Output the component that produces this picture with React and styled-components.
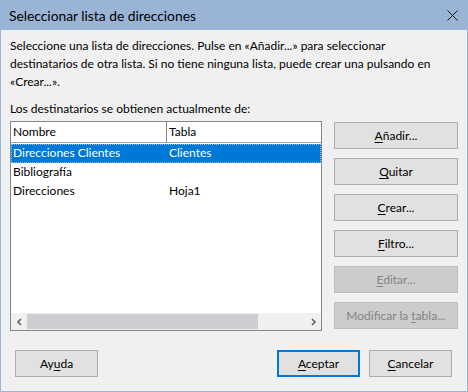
import React, { useState } from "react";
import styled, { createGlobalStyle, css } from "styled-components";

const GlobalStyle = createGlobalStyle`
  html, body { margin: 0; padding: 0; background: #f0f0f0; }
  body { font-family: Lato, "Noto Sans", sans-serif; font-size: 12px; color: #000; }
  * { box-sizing: border-box; }
`;

const Window = styled.div`
  width: 468px;
  height: 392px;
  display: flex;
  flex-direction: column;
  background: #f0f0f0;
  border: 1px solid #9ab4d5;
  border-top: none;
`;

const TitleBar = styled.div`
  height: 30px;
  flex: none;
  display: flex;
  align-items: center;
  justify-content: space-between;
  padding: 0 10px 0 9px;
  background: #9ab4d5;
  margin: 0 -1px;
`;

const Title = styled.div`
  font-size: 13.8px;
  color: #000;
  padding-top: 1px;
`;

const Body = styled.div`
  flex: 1;
  display: flex;
  flex-direction: column;
  padding: 7px 9px 0 9px;
`;

const Intro = styled.p`
  margin: 0;
  line-height: 18px;
`;

const Caption = styled.div`
  margin-top: 9px;
  line-height: 18px;
`;

const Main = styled.div`
  display: flex;
  gap: 12px;
  margin-top: 3px;
`;

const ListBox = styled.div`
  width: 312px;
  height: 210px;
  background: #fff;
  border: 1px solid #828790;
  display: flex;
  flex-direction: column;
`;

const HeaderRow = styled.div`
  display: grid;
  grid-template-columns: 155px 1fr;
  height: 21px;
  border-bottom: 1px solid #a0a0a0;
  flex: none;
`;

const HeaderCell = styled.div`
  padding-left: 2px;
  line-height: 19px;
  ${(p) => p.$divider && css`border-left: 1px solid #828790;`}
`;

const Rows = styled.div`
  flex: 1;
  padding-top: 1px;
`;

const Row = styled.div`
  display: grid;
  grid-template-columns: 155px 1fr;
  height: 19px;
  line-height: 18px;
  cursor: default;
  ${(p) =>
    p.$selected &&
    css`
      background: #0078d7;
      color: #fff;
      outline: 1px dotted #8fb9e8;
      outline-offset: -1px;
    `}
`;

const Cell = styled.div`
  padding-left: 2px;
  white-space: nowrap;
  ${(p) => p.$second && css`padding-left: 3px;`}
`;

const HScroll = styled.div`
  height: 17px;
  flex: none;
  display: flex;
  align-items: center;
  background: #f0f0f0;
`;

const Arrow = styled.div`
  width: 16px;
  height: 17px;
  display: flex;
  align-items: center;
  justify-content: center;
`;

const Track = styled.div`
  flex: 1;
  height: 15px;
`;

const Thumb = styled.div`
  height: 15px;
  background: #cdcdd2;
`;

const SideButtons = styled.div`
  display: flex;
  flex-direction: column;
  gap: 9px;
  padding-top: 1px;
`;

const Button = styled.button`
  font-family: Lato, "Noto Sans", sans-serif;
  font-size: 12px;
  height: 27px;
  width: ${(p) => p.$w || 124}px;
  background: #e1e1e1;
  border: 1px solid #adadad;
  color: #000;
  padding: 0;
  display: flex;
  align-items: center;
  justify-content: center;
  cursor: default;
  ${(p) =>
    p.$default &&
    css`
      border: 2px solid #0078d7;
    `}
  &:disabled {
    background: #cccccc;
    border-color: #bfbfbf;
    color: #838383;
  }
  u {
    text-underline-offset: 2px;
  }
`;

const Footer = styled.div`
  display: flex;
  align-items: center;
  margin-top: 19px;
  padding-left: 5px;
`;

const Spacer = styled.div`
  flex: 1;
`;

const FooterRight = styled.div`
  display: flex;
  gap: 9px;
  padding-right: 6px;
`;

function CloseIcon() {
  return (
    <svg width="11" height="11" viewBox="0 0 11 11">
      <path d="M0.5 0.5 L10.5 10.5 M10.5 0.5 L0.5 10.5" stroke="#111" strokeWidth="1" />
    </svg>
  );
}

function Chevron({ dir }) {
  const d = dir === "left" ? "M5 1 L2 4 L5 7" : "M2 1 L5 4 L2 7";
  return (
    <svg width="7" height="8" viewBox="0 0 7 8">
      <path d={d} fill="none" stroke="#606060" strokeWidth="1.6" />
    </svg>
  );
}

const rows = [
  { name: "Direcciones Clientes", table: "Clientes" },
  { name: "Bibliografía", table: "" },
  { name: "Direcciones", table: "Hoja1" },
];

export default function App() {
  const [selected, setSelected] = useState(0);

  return (
    <>
      <GlobalStyle />
      <Window>
        <TitleBar>
          <Title>Seleccionar lista de direcciones</Title>
          <CloseIcon />
        </TitleBar>
        <Body>
          <Intro>
            Seleccione una lista de direcciones. Pulse en «Añadir...» para seleccionar
            <br />
            destinatarios de otra lista. Si no tiene ninguna lista, puede crear una pulsando en
            <br />
            «Crear...».
          </Intro>
          <Caption>Los destinatarios se obtienen actualmente de:</Caption>
          <Main>
            <ListBox>
              <HeaderRow>
                <HeaderCell>Nombre</HeaderCell>
                <HeaderCell $divider>Tabla</HeaderCell>
              </HeaderRow>
              <Rows>
                {rows.map((r, i) => (
                  <Row key={r.name} $selected={i === selected} onClick={() => setSelected(i)}>
                    <Cell>{r.name}</Cell>
                    <Cell $second>{r.table}</Cell>
                  </Row>
                ))}
              </Rows>
              <HScroll>
                <Arrow>
                  <Chevron dir="left" />
                </Arrow>
                <Track>
                  <Thumb style={{ width: "83%" }} />
                </Track>
                <Arrow>
                  <Chevron dir="right" />
                </Arrow>
              </HScroll>
            </ListBox>
            <SideButtons>
              <Button><span><u>A</u>ñadir...</span></Button>
              <Button><span><u>Q</u>uitar</span></Button>
              <Button><span><u>C</u>rear...</span></Button>
              <Button><span><u>F</u>iltro...</span></Button>
              <Button disabled><span><u>E</u>ditar...</span></Button>
              <Button disabled><span>Modificar la <u>t</u>abla...</span></Button>
            </SideButtons>
          </Main>
          <Footer>
            <Button $w={83}><span>Ay<u>u</u>da</span></Button>
            <Spacer />
            <FooterRight>
              <Button $w={83} $default><span><u>A</u>ceptar</span></Button>
              <Button $w={83}><span><u>C</u>ancelar</span></Button>
            </FooterRight>
          </Footer>
        </Body>
      </Window>
    </>
  );
}
